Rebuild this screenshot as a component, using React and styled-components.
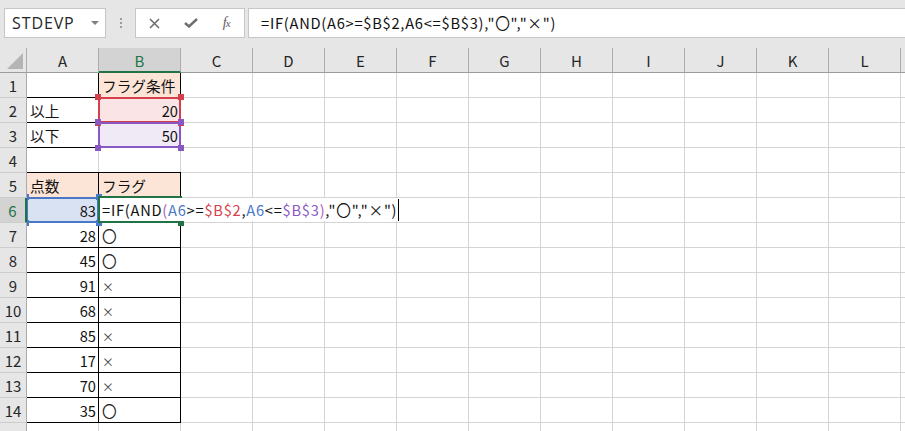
import React from 'react';
import styled, { createGlobalStyle, css } from 'styled-components';

const GlobalStyle = createGlobalStyle`
  html, body {
    margin: 0;
    padding: 0;
    background: #e6e6e6;
  }
  body {
    font-family: "Noto Sans CJK JP", "Noto Sans", sans-serif;
  }
`;

const COLORS = {
  grid: '#d4d4d4',
  header: '#e6e6e6',
  headerSel: '#d3d3d3',
  headerLine: '#ababab',
  green: '#217346',
  peach: '#fce4d6',
  blue: '#4a78c9',
  red: '#d4404c',
  purple: '#8a58c4',
  paren: '#b05cbc',
};

const Window = styled.div`
  width: 905px;
  height: 431px;
  overflow: hidden;
  background: #e6e6e6;
  display: flex;
  flex-direction: column;
`;

const FormulaBar = styled.div`
  display: flex;
  align-items: center;
  height: 30px;
  padding: 8px 0 10px 4px;
  flex-shrink: 0;
`;

const NameBox = styled.div`
  width: 102px;
  height: 30px;
  box-sizing: border-box;
  background: #fff;
  border: 1px solid #c6c6c6;
  display: flex;
  align-items: center;
  justify-content: space-between;
  padding: 0 6px 0 7px;
  font-family: "Open Sans", "Noto Sans", sans-serif;
  font-size: 16px;
  letter-spacing: 0.9px;
  color: #262626;
`;

const DropCaret = styled.span`
  width: 0;
  height: 0;
  border-left: 4px solid transparent;
  border-right: 4px solid transparent;
  border-top: 4px solid #808080;
`;

const Grip = styled.div`
  display: flex;
  flex-direction: column;
  gap: 2px;
  margin: 0 13px 0 14px;
  span {
    width: 2px;
    height: 2px;
    background: #9c9c9c;
  }
`;

const ButtonGroup = styled.div`
  width: 110px;
  height: 30px;
  box-sizing: border-box;
  background: #fff;
  border: 1px solid #c6c6c6;
  display: flex;
  align-items: center;
  padding-left: 1px;
`;

const IconButton = styled.div`
  width: 36px;
  height: 28px;
  display: flex;
  align-items: center;
  justify-content: center;
  color: #6e6e6e;
`;

const FxLabel = styled.span`
  font-family: "Liberation Serif", serif;
  font-style: italic;
  font-size: 14px;
  color: #5c5c5c;
  letter-spacing: -1px;
  sub {
    font-size: 11px;
    vertical-align: 0;
  }
`;

const FormulaInput = styled.div`
  flex: 1;
  height: 30px;
  box-sizing: border-box;
  margin-left: 3px;
  background: #fff;
  border: 1px solid #c6c6c6;
  border-right: none;
  padding-left: 12px;
  font-size: 14.67px;
  letter-spacing: 0.75px;
  line-height: 27px;
  color: #111;
  white-space: nowrap;
`;

const Sheet = styled.div`
  display: grid;
  grid-template-columns: 27px 72px 82px repeat(11, 72px);
  grid-auto-rows: 25px;
  background: #fff;
`;

const HeaderCell = styled.div`
  position: relative;
  z-index: 5;
  box-sizing: border-box;
  background: ${COLORS.header};
  border-right: 1px solid ${COLORS.headerLine};
  border-bottom: 1px solid #9b9b9b;
  text-align: center;
  font-size: 15px;
  line-height: 25px;
  color: #262626;
  ${(p) =>
    p.$selected &&
    css`
      background: ${COLORS.headerSel};
      color: ${COLORS.green};
      border-bottom: 2px solid ${COLORS.green};
    `}
`;

const Corner = styled(HeaderCell)`
  display: flex;
  align-items: flex-end;
  justify-content: flex-end;
  padding: 0 3px 3px 0;
`;

const RowHeader = styled.div`
  position: relative;
  z-index: 5;
  box-sizing: border-box;
  background: ${COLORS.header};
  border-right: 1px solid ${COLORS.headerLine};
  border-bottom: 1px solid #cdcdcd;
  text-align: center;
  font-size: 15px;
  line-height: 25px;
  color: #262626;
  ${(p) =>
    p.$selected &&
    css`
      background: ${COLORS.headerSel};
      color: ${COLORS.green};
      border-right: 2px solid ${COLORS.green};
    `}
`;

const Cell = styled.div`
  position: relative;
  box-sizing: border-box;
  background: ${(p) => p.$bg || '#fff'};
  border-right: 1px solid ${COLORS.grid};
  border-bottom: 1px solid ${COLORS.grid};
  padding: 0 2px 0 3px;
  font-size: 14.67px;
  line-height: 25px;
  color: #111;
  text-align: ${(p) => p.$align || 'left'};
  white-space: nowrap;
  ${(p) =>
    p.$box &&
    css`
      &::before {
        content: '';
        position: absolute;
        top: -1px;
        left: -1px;
        right: -1px;
        bottom: -1px;
        border: 1px solid #000;
        pointer-events: none;
        z-index: 1;
      }
    `}
`;

const RefFrame = styled.div`
  position: absolute;
  top: -1px;
  left: -1px;
  right: -1px;
  bottom: -1px;
  border: 2px solid ${(p) => p.$color};
  pointer-events: none;
  z-index: 2;
`;

const Handle = styled.span`
  position: absolute;
  width: 6px;
  height: 6px;
  background: ${(p) => p.$color};
  z-index: 3;
  ${(p) => (p.$v === 'top' ? 'top: -4px;' : 'bottom: -4px;')}
  ${(p) => (p.$h === 'left' ? 'left: -4px;' : 'right: -4px;')}
`;

const ActiveFrame = styled.div`
  position: absolute;
  top: -2px;
  left: -1px;
  right: -2px;
  bottom: -1px;
  border: 2px solid ${COLORS.green};
  border-right: none;
  z-index: 3;
  pointer-events: none;
`;

const EditBox = styled.div`
  position: absolute;
  top: 0;
  left: 1px;
  height: 23px;
  display: flex;
  align-items: center;
  background: #fff;
  padding: 0 2px 0 2px;
  z-index: 4;
  font-size: 14.67px;
  letter-spacing: 0.75px;
  line-height: 23px;
  color: #111;
`;

const Tok = styled.span`
  color: ${(p) => p.$color || 'inherit'};
`;

const TextCaret = styled.span`
  width: 1px;
  height: 22px;
  margin-left: 1px;
  background: #000;
`;

const Symbol = styled.span`
  font-size: ${(p) => (p.$small ? '12px' : '14.67px')};
  color: ${(p) => (p.$small ? '#444' : '#222')};
`;

const COLS = ['A', 'B', 'C', 'D', 'E', 'F', 'G', 'H', 'I', 'J', 'K', 'L', 'M'];

const scores = [
  [7, 28, '〇'],
  [8, 45, '〇'],
  [9, 91, '×'],
  [10, 68, '×'],
  [11, 85, '×'],
  [12, 17, '×'],
  [13, 70, '×'],
  [14, 35, '〇'],
];

function Handles({ color }) {
  return (
    <>
      <Handle $color={color} $v="top" $h="left" />
      <Handle $color={color} $v="top" $h="right" />
      <Handle $color={color} $v="bottom" $h="left" />
      <Handle $color={color} $v="bottom" $h="right" />
    </>
  );
}

function Blanks() {
  return COLS.slice(2).map((c) => <Cell key={c} />);
}

function Formula({ colored }) {
  if (!colored) {
    return <>=IF(AND(A6&gt;=$B$2,A6&lt;=$B$3),"〇","×")</>;
  }
  return (
    <>
      <Tok>=IF(AND</Tok>
      <Tok $color={COLORS.paren}>(</Tok>
      <Tok $color={COLORS.blue}>A6</Tok>
      <Tok>&gt;=</Tok>
      <Tok $color={COLORS.red}>$B$2</Tok>
      <Tok>,</Tok>
      <Tok $color={COLORS.blue}>A6</Tok>
      <Tok>&lt;=</Tok>
      <Tok $color={COLORS.purple}>$B$3</Tok>
      <Tok $color={COLORS.paren}>)</Tok>
      <Tok>,"〇","×")</Tok>
    </>
  );
}

export default function App() {
  return (
    <>
      <GlobalStyle />
      <Window>
        <FormulaBar>
          <NameBox>
            <span>STDEVP</span>
            <DropCaret />
          </NameBox>
          <Grip>
            <span />
            <span />
            <span />
          </Grip>
          <ButtonGroup>
            <IconButton>
              <svg width="11" height="11" viewBox="0 0 11 11">
                <path d="M1 1L10 10M10 1L1 10" stroke="#6e6e6e" strokeWidth="1.6" fill="none" />
              </svg>
            </IconButton>
            <IconButton>
              <svg width="14" height="10" viewBox="0 0 14 10">
                <path d="M1 5L5 8.5L13 1" stroke="#6e6e6e" strokeWidth="2.4" fill="none" />
              </svg>
            </IconButton>
            <IconButton>
              <FxLabel>
                f<sub>x</sub>
              </FxLabel>
            </IconButton>
          </ButtonGroup>
          <FormulaInput>
            <Formula />
          </FormulaInput>
        </FormulaBar>

        <Sheet>
          <Corner>
            <svg width="16" height="16" viewBox="0 0 16 16">
              <polygon points="16,0 16,16 0,16" fill="#b4b4b4" />
            </svg>
          </Corner>
          {COLS.map((c) => (
            <HeaderCell key={c} $selected={c === 'B'}>
              {c}
            </HeaderCell>
          ))}

          <RowHeader>1</RowHeader>
          <Cell />
          <Cell $bg={COLORS.peach} $box>
            フラグ条件
          </Cell>
          <Blanks />

          <RowHeader>2</RowHeader>
          <Cell $box>以上</Cell>
          <Cell $bg="#fae4e5" $align="right">
            20
            <RefFrame $color={COLORS.red} />
            <Handles color={COLORS.red} />
          </Cell>
          <Blanks />

          <RowHeader>3</RowHeader>
          <Cell $box>以下</Cell>
          <Cell $bg="#efeaf6" $align="right">
            50
            <RefFrame $color={COLORS.purple} />
            <Handles color={COLORS.purple} />
          </Cell>
          <Blanks />

          <RowHeader>4</RowHeader>
          <Cell />
          <Cell />
          <Blanks />

          <RowHeader>5</RowHeader>
          <Cell $bg={COLORS.peach} $box>
            点数
          </Cell>
          <Cell $bg={COLORS.peach} $box>
            フラグ
          </Cell>
          <Blanks />

          <RowHeader $selected>6</RowHeader>
          <Cell $bg="#d9e2f3" $align="right" $box>
            83
            <RefFrame $color={COLORS.blue} />
            <Handles color={COLORS.blue} />
          </Cell>
          <Cell $box>
            <ActiveFrame />
            <Handle $color={COLORS.green} $v="bottom" $h="right" />
            <EditBox>
              <Formula colored />
              <TextCaret />
            </EditBox>
          </Cell>
          <Blanks />

          {scores.map(([row, score, flag]) => (
            <React.Fragment key={row}>
              <RowHeader>{row}</RowHeader>
              <Cell $align="right" $box>
                {score}
              </Cell>
              <Cell $box>
                <Symbol $small={flag === '×'}>{flag}</Symbol>
              </Cell>
              <Blanks />
            </React.Fragment>
          ))}

          <RowHeader>15</RowHeader>
          <Cell />
          <Cell />
          <Blanks />
        </Sheet>
      </Window>
    </>
  );
}
